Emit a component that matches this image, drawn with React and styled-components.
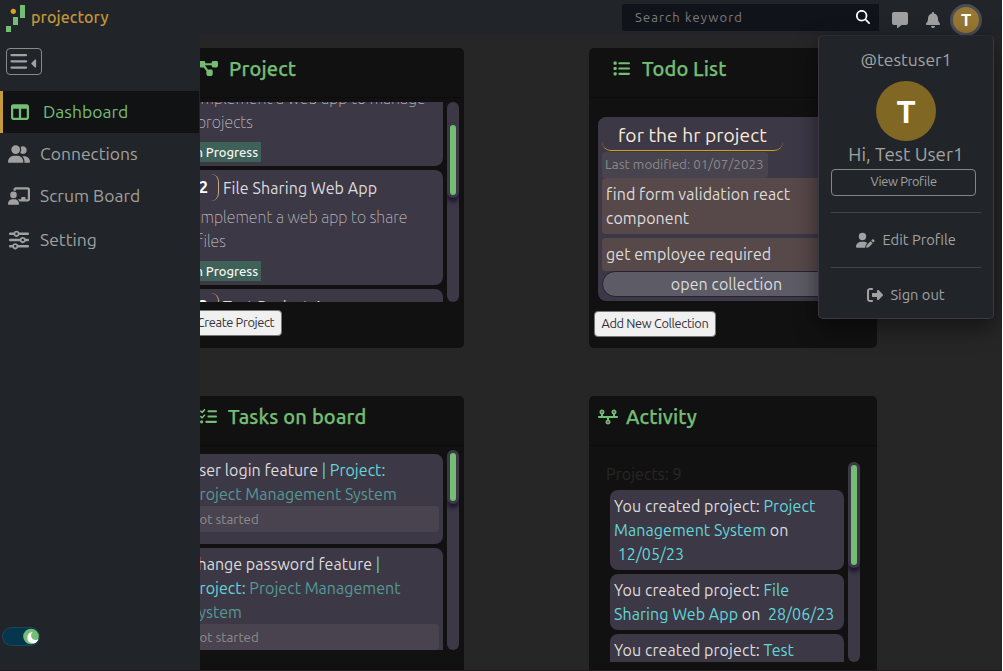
import React from "react";
import styled, { createGlobalStyle, css } from "styled-components";
import {
  FaTableColumns,
  FaUserGroup,
  FaChalkboardUser,
  FaSliders,
  FaDiagramProject,
  FaList,
  FaListCheck,
  FaTimeline,
  FaUserPen,
  FaRightFromBracket,
  FaMessage,
  FaBell,
  FaMagnifyingGlass,
  FaCaretLeft,
} from "react-icons/fa6";

const GlobalStyle = createGlobalStyle`
  *, *::before, *::after { box-sizing: border-box; }
  html { background: #fff; }
  body {
    margin: 0;
    overflow: hidden;
    font-family: Ubuntu, "Noto Sans", "Open Sans", sans-serif;
    font-size: 16px;
    line-height: 24px;
    color: #dcdcdc;
  }
  button { font-family: inherit; }
  svg { display: block; flex: none; }
`;

/* a run of text: s = size, ls = letter spacing, c = colour, w = weight */
const T = styled.span`
  font-size: ${(p) => p.$s || 16}px;
  letter-spacing: ${(p) => p.$ls ?? (p.$s ? 0 : 0.06)}px;
  white-space: pre;
  color: ${(p) => p.$c || "inherit"};
  font-weight: ${(p) => p.$w || "inherit"};
`;

const Page = styled.div`
  position: relative;
  display: flex;
  flex-direction: column;
  width: 1002px;
  height: 671px;
  overflow: hidden;
  background: #262626;
  border-bottom: 1px solid #201b1c;
`;

/* ---------- top bar ---------- */
const TopBar = styled.header`
  display: flex;
  align-items: flex-start;
  height: 35px;
  flex: none;
  padding: 4px 20px 0 6px;
  background: #212529;
`;
const Brand = styled.div`
  display: flex;
  gap: 5px;
  color: #c2953a;
  line-height: 26px;
  margin-right: auto;
`;
const Search = styled.div`
  display: flex;
  align-items: center;
  justify-content: space-between;
  width: 257px;
  height: 27px;
  padding: 0 9px 2px 13px;
  border-radius: 3px 0 0 3px;
  background: #11131a;
  color: #7b7b7b;
`;
const TopIcons = styled.div`
  display: flex;
  align-items: flex-start;
  color: #a0a0a0;
  padding-left: 13px;
`;
const Avatar = styled.div`
  display: grid;
  place-items: center;
  flex: none;
  width: ${(p) => p.$d}px;
  height: ${(p) => p.$d}px;
  margin: ${(p) => p.$m || 0};
  border-radius: 50%;
  background: ${(p) => p.$bg};
  color: #fff;
  font-weight: 700;
  font-size: ${(p) => p.$f}px;
  ${(p) => p.$ring && css`border: 3px solid #4b4d53;`}
`;

/* ---------- profile menu ---------- */
const Menu = styled.div`
  position: absolute;
  z-index: 3;
  left: 818px;
  top: 35px;
  width: 176px;
  height: 284px;
  padding: 12px 12px;
  display: flex;
  flex-direction: column;
  align-items: center;
  background: #212529;
  border: 1px solid #3b3845;
  border-top-color: #2a2b31;
  border-radius: 5px;
  box-shadow: 0 8px 22px rgba(0, 0, 0, 0.5);
  color: #a2a2a2;
`;
const OutlineButton = styled.button`
  flex: none;
  width: 145px;
  height: 27px;
  padding: 0 0 2px;
  margin: 3px 5px 0 0;
  align-self: flex-start;
  border: 1px solid #858585;
  border-radius: 4px;
  background: none;
  color: #a2a2a2;
  line-height: 22px;
`;
const Divider = styled.hr`
  align-self: stretch;
  width: 150px;
  border: 0;
  border-top: 1px solid #414347;
  margin: ${(p) => p.$m};
`;
const MenuRow = styled.div`
  display: flex;
  align-items: center;
  gap: ${(p) => p.$gap}px;
  height: 24px;
`;

/* ---------- sidebar ---------- */
const Sidebar = styled.aside`
  position: absolute;
  z-index: 2;
  left: 0;
  top: 35px;
  bottom: 0;
  width: 200px;
  background: #212529;
  display: flex;
  flex-direction: column;
  padding: 13px 1px 24px 0;
`;
const Collapse = styled.button`
  display: flex;
  align-items: center;
  gap: 0;
  width: 36px;
  height: 27px;
  padding: 0 4px 0 3px;
  margin: 0 0 16px 6px;
  border: 1px solid #8a8a8a;
  border-radius: 4px;
  background: none;
  color: #a2a2a2;
  & > svg:last-child { margin-top: 3px; }
`;
const NavItem = styled.a`
  display: flex;
  align-items: center;
  height: ${(p) => p.$h || 42}px;
  padding-left: 8px;
  color: #a0a0a0;
  & > svg { width: 22px; }
  & > span { margin-left: 10px; }
  ${(p) =>
    p.$active &&
    css`
      border-left: 3px solid #c69a3b;
      background: #111214;
      color: #74bd75;
      & > svg { width: 18px; }
      & > span { margin-left: 14px; }
    `}
`;
const Toggle = styled.div`
  display: flex;
  justify-content: flex-end;
  align-items: center;
  margin: auto 0 0 2px;
  width: 38px;
  height: 19px;
  border-radius: 10px;
  background: #05364c;
  border: 1px solid #1d4658;
`;

/* ---------- dashboard cards ---------- */
const Board = styled.main`
  display: grid;
  grid-template-columns: 288px 288px;
  grid-template-rows: 300px 300px;
  gap: 48px 125px;
  padding: 13px 0 0 176px;
`;
const Card = styled.section`
  display: flex;
  flex-direction: column;
  border-radius: 5px;
  background: #111111;
  overflow: hidden;
`;
const CardHead = styled.h2`
  display: flex;
  align-items: center;
  gap: ${(p) => p.$gap}px;
  height: 50px;
  flex: none;
  margin: 0;
  padding: 0 0 8px ${(p) => p.$pl}px;
  border-bottom: 1px solid #0c0c0c;
  color: #74bd75;
  font-weight: 500;
  -webkit-text-stroke: 0.25px currentColor;
`;
const ScrollArea = styled.div`
  display: flex;
  gap: 4px;
  height: 200px;
  flex: none;
  margin: ${(p) => p.$m};
  overflow: hidden;
`;
const List = styled.div`
  display: flex;
  flex-direction: column;
  gap: 4px;
  width: ${(p) => p.$w}px;
  height: 200px;
  overflow: hidden;
  & > :first-child { margin-top: ${(p) => p.$offset || 0}px; }
`;
const ActivityItems = styled.div`
  display: flex;
  flex-direction: column;
  gap: 4px;
  padding-left: 4px;
`;
const Track = styled.div`
  width: 12px;
  height: 200px;
  border-radius: 6px;
  background: #3d3846;
  padding-top: ${(p) => p.$top || 0}px;
  overflow: hidden;
`;
const Thumb = styled.div`
  height: ${(p) => p.$h}px;
  border: 3px solid #3d3846;
  border-radius: 6px;
  background: #74bd75;
  box-shadow: 0 4px 4px #1b1530;
`;
const Item = styled.article`
  flex: none;
  height: ${(p) => p.$h}px;
  padding: ${(p) => p.$p || "4px"};
  border-radius: 8px;
  background: #3d3846;
`;
const Line = styled.div`
  height: 24px;
  line-height: 24px;
  white-space: pre;
  padding-left: ${(p) => p.$pl || 0}px;
`;
const TitleRow = styled.div`
  display: flex;
  align-items: center;
  height: 33px;
  padding-bottom: 2px;
`;
const Num = styled.span`
  display: block;
  width: 32px;
  height: 27px;
  line-height: 27px;
  padding-right: 10px;
  margin-right: 4px;
  text-align: right;
  color: #fff;
  font-weight: 700;
  border-right: 1px solid #d0a37c;
  border-radius: 8px;
`;
const Badge = styled.div`
  width: 74px;
  height: 20px;
  line-height: 18px;
  margin-top: 8px;
  padding-right: 3px;
  text-align: right;
  background: #3e6158;
  color: #f4f4f4;
`;
const Status = styled.div`
  height: 26px;
  line-height: 24px;
  border-radius: 3px;
  background: #48434f;
  color: #8f8c8c;
`;
const LightButton = styled.button`
  width: ${(p) => p.$w}px;
  height: 26px;
  flex: none;
  margin: ${(p) => p.$m};
  padding: 0 0 2px;
  border: 1px solid #767676;
  border-radius: 4px;
  background: #f0f0f0;
  color: #33313c;
  line-height: 22px;
`;
const Collection = styled.article`
  width: 258px;
  height: 184px;
  margin: 19px 0 0 9px;
  padding: 4px 5px 0 4px;
  border-radius: 8px;
  background: #3d3846;
`;
const CollectionTitle = styled.div`
  width: 181px;
  height: 30px;
  line-height: 28px;
  padding-left: 16px;
  border-bottom: 1px solid #d29e1c;
  border-radius: 9px;
  color: #faebd7;
`;
const Modified = styled.div`
  width: 166px;
  height: 26px;
  margin-top: 1px;
  padding-left: 3px;
  line-height: 23px;
  border-radius: 3px;
  background: #47434f;
  color: #8b8888;
`;
const Todo = styled.div`
  height: ${(p) => p.$h}px;
  padding: 4px;
  margin-bottom: ${(p) => p.$mb || 0}px;
  border-radius: 4px;
  background: #574849;
`;
const OpenButton = styled.div`
  height: 26px;
  line-height: 24px;
  text-align: center;
  border: 1px solid #262136;
  border-radius: 13px;
  background: #5d5b65;
`;

const Logo = () => (
  <svg width="20" height="28" viewBox="0 0 20 28">
    <g fill="#74bd75">
      <rect x="14" y="1" width="5" height="13" />
      <rect x="7" y="13" width="5" height="8" />
      <rect x="0" y="22" width="5" height="6" />
    </g>
    <circle cx="7.3" cy="7.3" r="2.6" fill="#dba11d" />
  </svg>
);

const Bars = () => (
  <svg width="18" height="17" viewBox="0 0 18 17" stroke="currentColor" strokeWidth="2.2" strokeLinecap="round">
    <path d="M1.5 2.1h14.6M1.5 8.3h14.6M1.5 14.6h14.6" />
  </svg>
);

const Moon = () => (
  <svg width="16" height="17" viewBox="0 0 16 17">
    <circle cx="8" cy="8.5" r="7.8" fill="#74bd75" />
    <path d="M9.8 3.9A5.6 5.6 0 1 0 15.4 11A4.1 4.1 0 1 1 9.8 3.9Z" fill="#fff" />
  </svg>
);

const Scroll = ({ top, h }) => (
  <Track $top={top}>
    <Thumb $h={h} />
  </Track>
);

const ProjectItem = ({ n, title, lines }) => (
  <Item $h={115} $p="2px 0 0 0">
    <TitleRow>
      <Num>{n}</Num>
      <T $ls={0.1}>{title}</T>
    </TitleRow>
    {lines.map((l) => (
      <Line key={l} $pl={10}>
        <T $w={100} $c="#d2d0d2" $ls={0.01}>{l}</T>
      </Line>
    ))}
    <Badge>
      <T $s={13} $w={500} $ls={-0.03}>In Progress</T>
    </Badge>
  </Item>
);

const cyan = "#62d6d8";
const teal = "#559895";

export default function App() {
  return (
    <>
      <GlobalStyle />
      <Page>
        <TopBar>
          <Brand>
            <Logo />
            <T $w={500} $ls={0.1}>projectory</T>
          </Brand>
          <Search>
            <T $s={13} $ls={1.13}>Search keyword</T>
            <FaMagnifyingGlass size={14} color="#fff" />
          </Search>
          <TopIcons>
            <FaMessage size={16} style={{ marginTop: 8 }} />
            <FaBell size={16} style={{ margin: "8px 9px 0 17px" }} />
            <Avatar $d={32} $f={17} $bg="#967733" $ring>T</Avatar>
          </TopIcons>
        </TopBar>

        <Board>
          <Card>
            <CardHead $pl={23} $gap={11}>
              <FaDiagramProject size={19} />
              <T $s={20} $ls={0.17}>Project</T>
            </CardHead>
            <ScrollArea $m="4px 0 0 11px">
              <List $w={256} $offset={-51}>
                <ProjectItem n="1" title="Project Management System" lines={["implement a web app to manage", "projects"]} />
                <ProjectItem n="2" title="File Sharing Web App" lines={["implement a web app to share", "files"]} />
                <ProjectItem n="3" title="Test Project A" lines={["test"]} />
              </List>
              <Scroll top={20} h={76} />
            </ScrollArea>
            <LightButton $w={93} $m="8px 0 0 13px">
              <T $s={12.8} $ls={-0.35}>Create Project</T>
            </LightButton>
          </Card>

          <Card>
            <CardHead $pl={24} $gap={12}>
              <FaList size={17} />
              <T $s={20} $ls={0.12}>Todo List</T>
            </CardHead>
            <Collection>
              <CollectionTitle>
                <T $s={19.2} $ls={0.06}>for the hr project</T>
              </CollectionTitle>
              <Modified>
                <T $s={13.4}>Last modified: 01/07/2023</T>
              </Modified>
              <Todo $h={56} $mb={4}>
                <Line><T>find form validation react</T></Line>
                <Line><T>component</T></Line>
              </Todo>
              <Todo $h={33}>
                <Line><T>get employee required</T></Line>
              </Todo>
              <OpenButton><T>open collection</T></OpenButton>
            </Collection>
            <LightButton $w={122} $m="10px 0 0 5px">
              <T $s={12.8} $ls={-0.35}>Add New Collection</T>
            </LightButton>
          </Card>

          <Card>
            <CardHead $pl={24} $gap={11}>
              <FaListCheck size={17} />
              <T $s={20} $ls={0.17}>Tasks on board</T>
            </CardHead>
            <ScrollArea $m="4px 0 0 11px">
              <List $w={256} $offset={4}>
                <Item $h={90} $p="4px 4px 4px 3px">
                  <Line><T $ls={0.03}>user login feature</T><T $c={cyan} $ls={0.03}> | Project:</T></Line>
                  <Line><T $c={teal} $ls={0.03}>Project Management System</T></Line>
                  <Status><T $s={13.3}>Not started</T></Status>
                </Item>
                <Item $h={114} $p="4px 4px 4px 3px">
                  <Line><T $ls={0.03}>change password feature</T><T $c={cyan} $ls={0.03}> |</T></Line>
                  <Line><T $c={cyan} $ls={0.03}>Project:</T><T $c={teal} $ls={0.03}> Project Management</T></Line>
                  <Line><T $c={teal} $ls={0.03}>System</T></Line>
                  <Status><T $s={13.3}>Not started</T></Status>
                </Item>
              </List>
              <Scroll top={0} h={54} />
            </ScrollArea>
          </Card>

          <Card>
            <CardHead $pl={9} $gap={8}>
              <FaTimeline size={20} />
              <T $s={20} $ls={0.15}>Activity</T>
            </CardHead>
            <ScrollArea $m="16px 0 0 17px">
              <List $w={238}>
                <Line><T $c="#272727">Projects: 9</T></Line>
                <ActivityItems>
                  <Item $h={80}>
                    <Line><T>You created project: </T><T $c={cyan}>Project</T></Line>
                    <Line><T $c={cyan}>Management System</T><T> on</T></Line>
                    <Line><T $c={cyan}> 12/05/23</T></Line>
                  </Item>
                  <Item $h={56}>
                    <Line><T>You created project: </T><T $c={cyan}>File</T></Line>
                    <Line><T $c={cyan}>Sharing Web App</T><T> on </T><T $c={cyan}> 28/06/23</T></Line>
                  </Item>
                  <Item $h={80}>
                    <Line><T>You created project: </T><T $c={cyan}>Test</T></Line>
                  </Item>
                </ActivityItems>
              </List>
              <Scroll top={0} h={106} />
            </ScrollArea>
          </Card>
        </Board>

        <Sidebar>
          <Collapse aria-label="Collapse menu">
            <Bars />
            <FaCaretLeft size={13} />
          </Collapse>
          <NavItem $active>
            <FaTableColumns size={18} />
            <T $s={17.5}>Dashboard</T>
          </NavItem>
          <NavItem>
            <FaUserGroup size={20} />
            <T $s={17.5}>Connections</T>
          </NavItem>
          <NavItem>
            <FaChalkboardUser size={20} />
            <T $s={17.5}>Scrum Board</T>
          </NavItem>
          <NavItem $h={46}>
            <FaSliders size={20} />
            <T $s={17.5}>Setting</T>
          </NavItem>
          <Toggle><Moon /></Toggle>
        </Sidebar>

        <Menu>
          <T $s={17.5}>@testuser1</T>
          <Avatar $d={60} $f={32} $bg="#806723" $m="9px 0 1px">T</Avatar>
          <T $s={18.8}>Hi, Test User1</T>
          <OutlineButton><T $s={12.8} $ls={-0.35}>View Profile</T></OutlineButton>
          <Divider $m="16px 0 15px" />
          <MenuRow $gap={8}>
            <FaUserPen size={18.5} />
            <T $s={14.7}>Edit Profile</T>
          </MenuRow>
          <Divider $m="15px 0 15px" />
          <MenuRow $gap={7}>
            <FaRightFromBracket size={16} />
            <T $s={14.7}>Sign out</T>
          </MenuRow>
        </Menu>
      </Page>
    </>
  );
}
